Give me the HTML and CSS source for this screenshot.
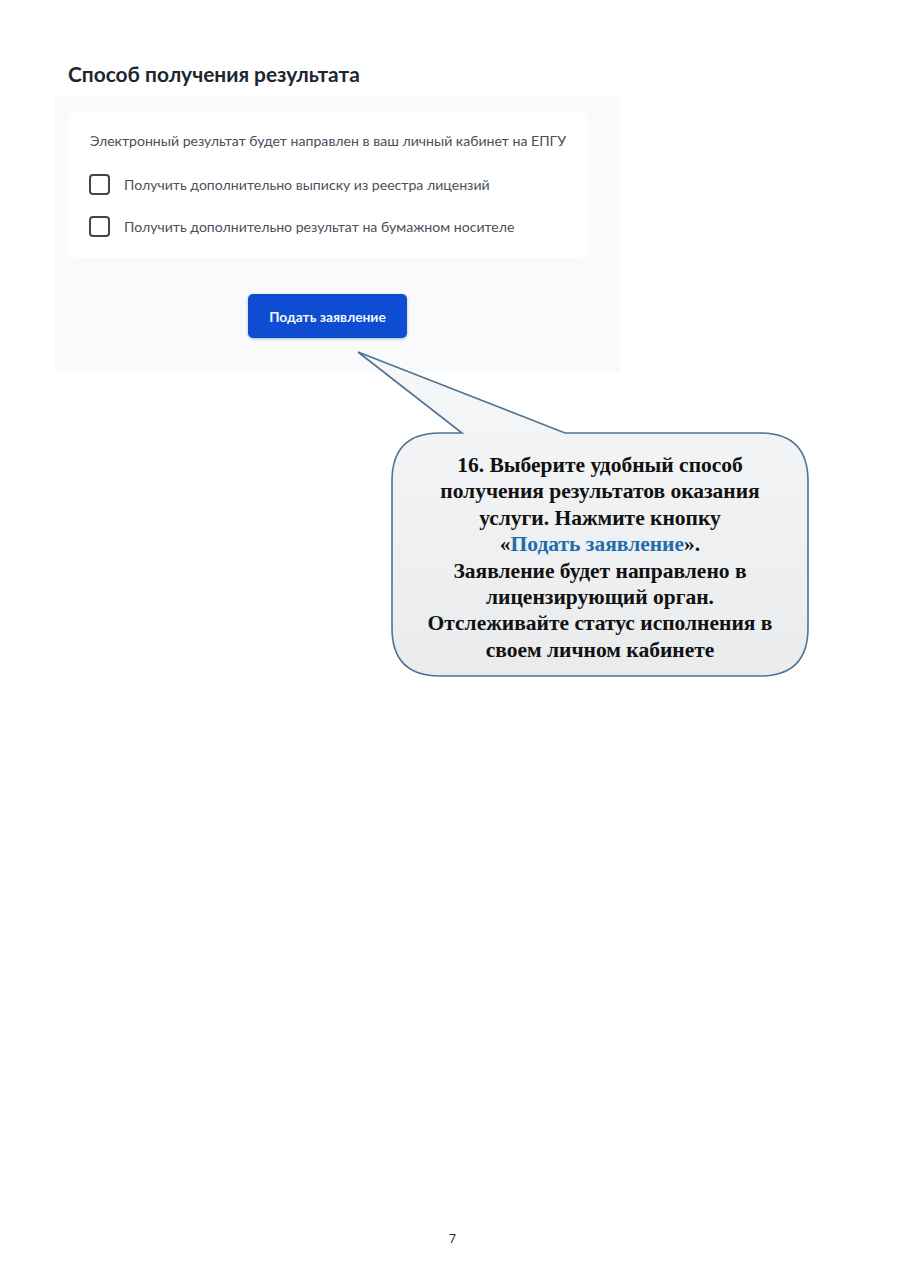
FILE: index.html
```html
<!DOCTYPE html>
<html lang="ru">
<head>
<meta charset="utf-8">
<link rel="stylesheet" href="styles.css">
</head>
<body>
<div class="page">
  <section class="shot">
    <h2 class="title">Способ получения результата</h2>
    <div class="panel">
      <div class="card">
        <p class="info">Электронный результат будет направлен в ваш личный кабинет на ЕПГУ</p>
        <label class="check"><span class="box"></span><span>Получить дополнительно выписку из реестра лицензий</span></label>
        <label class="check"><span class="box"></span><span>Получить дополнительно результат на бумажном носителе</span></label>
      </div>
      <div class="actions">
        <button class="submit">Подать заявление</button>
      </div>
    </div>
  </section>

  <div class="callout">
    <svg class="bubble" width="905" height="700" viewBox="0 0 905 700">
      <defs>
        <linearGradient id="g" x1="0" y1="0" x2="0" y2="1">
          <stop offset="0" stop-color="#f6f7f8"/>
          <stop offset="1" stop-color="#e9ebed"/>
        </linearGradient>
      </defs>
      <path d="M440 433 L462 433 L358 352 L565 433 L760 433 Q808 433 808 481 L808 628 Q808 676 760 676 L440 676 Q392 676 392 628 L392 481 Q392 433 440 433 Z" fill="url(#g)" stroke="#4e7395" stroke-width="1.6" stroke-linejoin="miter"/>
    </svg>
    <div class="note">
      16. Выберите удобный способ получения результатов оказания услуги. Нажмите кнопку <span class="nw">«<span class="hl">Подать заявление</span>».</span><br>
      Заявление будет направлено в лицензирующий орган.<br>
      Отслеживайте статус исполнения в своем личном кабинете
    </div>
  </div>

  <footer class="pnum">7</footer>
</div>
</body>
</html>
```

FILE: styles.css
```css
html, body {
  margin: 0;
  padding: 0;
  background: #ffffff;
}
.page {
  position: relative;
  width: 905px;
  height: 1280px;
  display: flex;
  flex-direction: column;
}
.shot {
  margin: 60px 0 0 55px;
  width: 565px;
  font-family: Lato, "Noto Sans", sans-serif;
}
.title {
  margin: 0 0 0 13px;
  font-size: 20.9px;
  line-height: 28px;
  font-weight: 700;
  color: #1c2630;
  height: 35px;
}
.panel {
  background: #f9fafb;
  padding: 17px 32px 34px 13px;
  height: 226px;
}
.card {
  background: #ffffff;
  border-radius: 8px;
  width: 520px;
  height: 146px;
  box-sizing: border-box;
  padding: 20px 22px 0 21px;
  display: flex;
  flex-direction: column;
}
.info {
  margin: 0 0 24px 1px;
  font-size: 14.1px;
  line-height: 18px;
  color: #484f57;
}
.check {
  display: flex;
  align-items: center;
  gap: 14px;
  font-size: 14.1px;
  line-height: 21px;
  color: #4a5159;
  margin-bottom: 21px;
}
.box {
  width: 21px;
  height: 21px;
  box-sizing: border-box;
  border: 2px solid #3e4751;
  border-radius: 4px;
  flex: none;
}
.actions {
  display: flex;
  padding: 36px 0 0 180px;
}
.submit {
  width: 159px;
  height: 44px;
  border: none;
  border-radius: 5px;
  background: #0e4dd2;
  color: #f4f7ff;
  font-family: Lato, "Noto Sans", sans-serif;
  font-size: 13.8px;
  font-weight: 700;
  box-shadow: 0 1px 3px rgba(20, 50, 120, 0.35);
}
.callout {
  position: absolute;
  left: 0;
  top: 0;
  width: 905px;
  height: 700px;
  pointer-events: none;
}
.bubble {
  position: absolute;
  left: 0;
  top: 0;
}
.note {
  position: absolute;
  left: 420px;
  top: 452px;
  width: 360px;
  text-align: center;
  font-family: "Liberation Serif", "Times New Roman", serif;
  font-weight: 700;
  font-size: 21.5px;
  line-height: 26.4px;
  color: #111111;
}
.nw {
  white-space: nowrap;
}
.hl {
  color: #1f6cb0;
}
.pnum {
  position: absolute;
  left: 0;
  top: 1229px;
  width: 905px;
  text-align: center;
  font-family: "Open Sans", "Liberation Sans", sans-serif;
  font-size: 13px;
  color: #222;
}
```
